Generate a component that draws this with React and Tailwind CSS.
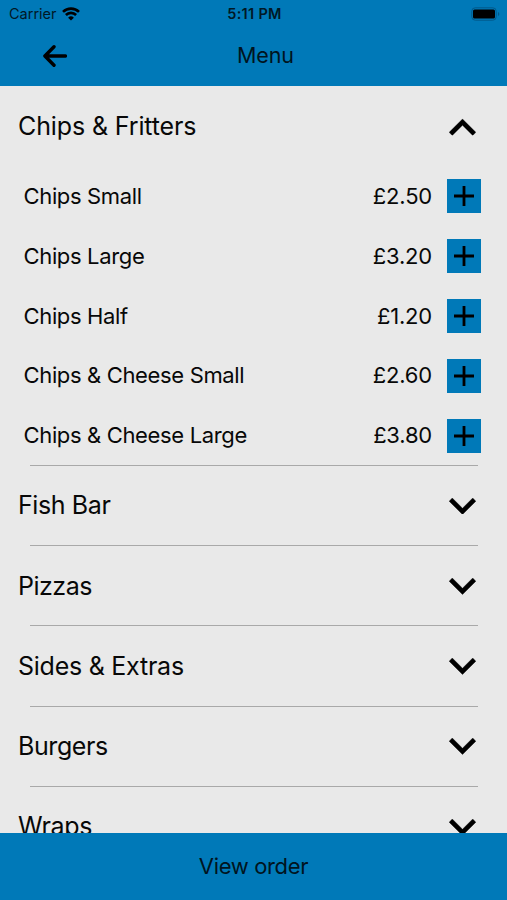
import React, { useState } from 'react';

const sections = [
  {
    name: 'Chips & Fritters',
    tracking: 'tracking-[-0.12px]',
    items: [
      { name: 'Chips Small', price: '£2.50' },
      { name: 'Chips Large', price: '£3.20' },
      { name: 'Chips Half', price: '£1.20' },
      { name: 'Chips & Cheese Small', price: '£2.60' },
      { name: 'Chips & Cheese Large', price: '£3.80' }
    ]
  },
  { name: 'Fish Bar', tracking: 'tracking-[-0.4px]', items: [] },
  { name: 'Pizzas', tracking: 'tracking-[-0.5px]', items: [] },
  { name: 'Sides & Extras', tracking: 'tracking-[-0.25px]', items: [] },
  { name: 'Burgers', tracking: 'tracking-[-0.4px]', items: [] },
  { name: 'Wraps', tracking: 'tracking-[-0.3px]', items: [] }
];

const Chevron = ({ open }) => (
  <svg viewBox="6 8.59 12 7.41" className={open ? 'h-[16.5px] w-[27px] rotate-180' : 'h-[16.5px] w-[27px]'}>
    <path d="M7.41 8.59 12 13.17l4.59-4.58L18 10l-6 6-6-6z" fill="#000" stroke="#000" strokeWidth="0.15" />
  </svg>
);

const StatusBar = () => (
  <div className="grid h-[27px] grid-cols-3 items-center pl-[9px] pr-[7px] text-[#001826]">
    <div className="flex items-center gap-[5px]">
      <span className="text-[14.5px]">Carrier</span>
      <svg viewBox="0 0 18 14" className="h-[14px] w-[18px]" fill="none" stroke="#000" strokeWidth="2.6">
        <path d="M1 4.9a11.3 11.3 0 0 1 16 0" />
        <path d="M3.9 8a7.2 7.2 0 0 1 10.2 0" />
        <path d="M9 13.6 6.1 10.7a4.1 4.1 0 0 1 5.8 0z" fill="#000" stroke="none" />
      </svg>
    </div>
    <span className="text-center text-[14.5px] font-semibold tracking-[0.3px]">5:11 PM</span>
    <svg viewBox="0 0 29 14" className="h-[14px] w-[29px] justify-self-end">
      <rect x="0.8" y="0.8" width="24.4" height="12.4" rx="3.4" fill="none" stroke="#00598a" />
      <rect x="2" y="2.5" width="22" height="9" rx="1.5" fill="#000" />
      <path d="M27 5v4c1.8-.6 1.8-3.4 0-4z" fill="#00598a" />
    </svg>
  </div>
);

const MenuItem = ({ item }) => (
  <div className="flex h-[59.8px] items-center pl-[23.5px] pr-[26px]">
    <span className="flex-1 text-[22px] tracking-[-0.35px]">{item.name}</span>
    <span className="mr-[15px] text-[22px] tracking-[-0.2px]">{item.price}</span>
    <button type="button" className="flex h-[34px] w-[34px] items-center justify-center bg-[#0079b8]">
      <svg viewBox="0 0 20 20" className="h-5 w-5" stroke="#000" strokeWidth="2.8">
        <path d="M10 0v20M0 10h20" />
      </svg>
    </button>
  </div>
);

const App = () => {
  const [openSection, setOpenSection] = useState('Chips & Fritters');

  return (
    <div className="flex h-[900px] w-full flex-col overflow-hidden bg-[#e9e9e9] font-['Inter',sans-serif] text-[#080808]">
      <header className="h-[86px] shrink-0 bg-[#0079b8]">
        <StatusBar />
        <div className="grid h-[57px] grid-cols-3 items-center">
          <button type="button" className="ml-[43px] w-6">
            <svg
              viewBox="0 0 24 22"
              className="h-[22px] w-6"
              fill="none"
              stroke="#000"
              strokeWidth="3.4"
              strokeLinecap="round"
              strokeLinejoin="round"
            >
              <path d="M11 1.8 1.9 11l9.1 9.2M2.4 11h20" />
            </svg>
          </button>
          <h1 className="pl-[24px] text-center text-[21.5px] tracking-[-0.1px] text-[#001420]">Menu</h1>
        </div>
      </header>

      <main className="min-h-0 flex-1 overflow-hidden pt-[0.9px]">
        {sections.map((section) => {
          const open = openSection === section.name;
          return (
            <section key={section.name}>
              <button
                type="button"
                onClick={() => setOpenSection(open ? null : section.name)}
                className="flex h-[79.2px] w-full items-center justify-between pl-[18px] pr-[31px] pt-[0.8px]"
              >
                <span className={`text-[25px] ${section.tracking}`}>{section.name}</span>
                <Chevron open={open} />
              </button>
              {open && (
                <div className="h-[299px] pt-[0.5px]">
                  {section.items.map((item) => (
                    <MenuItem key={item.name} item={item} />
                  ))}
                </div>
              )}
              <div className="ml-[30px] mr-[29px] h-px bg-[#a9a9a9]" />
            </section>
          );
        })}
      </main>

      <button type="button" className="h-[67px] shrink-0 bg-[#0079b8] text-[22px] tracking-[-0.35px] text-[#001420]">
        View order
      </button>
    </div>
  );
};

export default App;
